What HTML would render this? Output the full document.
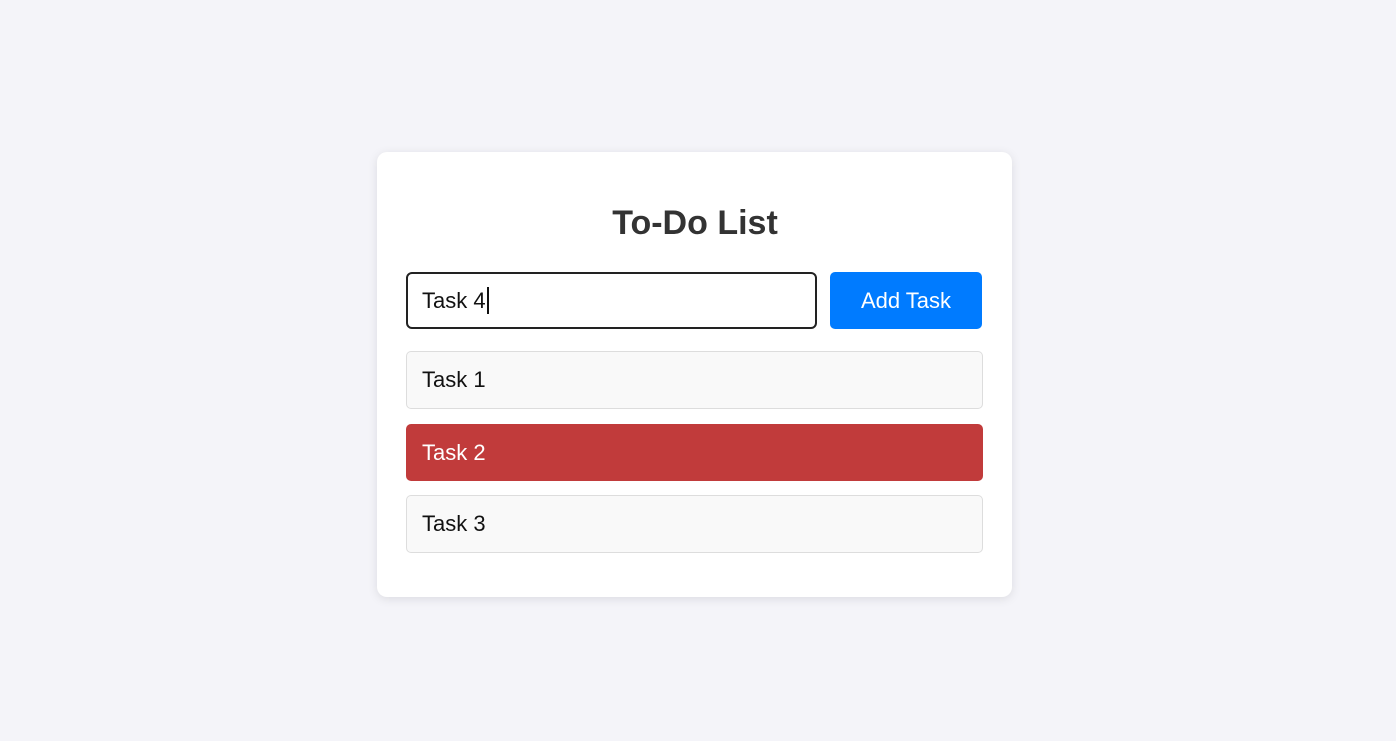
<!DOCTYPE html>
<html><head><style>
html,body{margin:0;padding:0;width:1396px;height:741px;background:#f4f4f9;font-family:"Liberation Sans",Arial,sans-serif;}
.card{position:absolute;left:377px;top:152px;width:635px;height:445px;background:#fff;border-radius:10px;box-shadow:0 2px 10px rgba(0,0,0,0.1);}
h1{position:absolute;left:0;right:6px;top:202px;margin:0;text-align:center;font-size:34px;font-weight:bold;color:#333;line-height:42px;}
.input{position:absolute;left:406px;top:272px;width:393px;height:53px;border:2px solid #222;border-radius:6px;font-size:22px;line-height:53px;padding-left:14px;box-sizing:content-box;color:#111;}
.input span{display:inline-block;width:2px;height:27px;background:#111;vertical-align:middle;margin-top:-4px;margin-left:1px;}
.btn{position:absolute;left:830px;top:272px;width:152px;height:57px;background:#007bff;color:#fff;border-radius:5px;font-size:22px;line-height:57px;text-align:center;}
.item{position:absolute;left:406px;border:1px solid #ddd;border-radius:5px;background:#f9f9f9;font-size:22px;line-height:56px;padding-left:15px;box-sizing:border-box;width:577px;height:58px;color:#111;}
.red{background:#c13b3b;border-color:#c13b3b;color:#fff;}
</style></head><body>
<div class="card"></div>
<h1>To-Do List</h1>
<div class="input">Task 4<span></span></div>
<div class="btn">Add Task</div>
<div class="item" style="top:351px">Task 1</div>
<div class="item red" style="top:424px;height:57px">Task 2</div>
<div class="item" style="top:495px">Task 3</div>
</body></html>
